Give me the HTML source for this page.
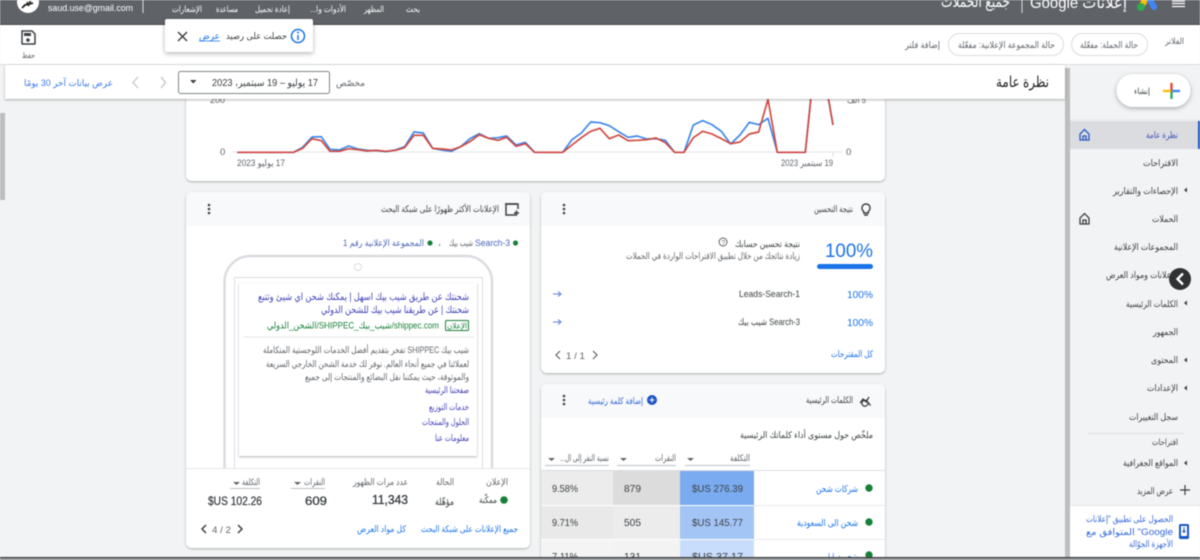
<!DOCTYPE html>
<html lang="ar">
<head>
<meta charset="utf-8">
<title>Google Ads</title>
<style>
html,body{margin:0;padding:0;width:1200px;height:560px;overflow:hidden;background:#f1f3f4}
svg{display:block;filter:blur(.4px)}
text{font-family:"Liberation Sans","DejaVu Sans","Noto Sans CJK SC",sans-serif;font-size:9px;fill:#3c4043}
.r{direction:rtl;text-anchor:start}
.w{fill:#fff}
.g{fill:#5f6368}
.b{fill:#1a73e8}
.p{fill:#3f3fb5}
.h{fill:#3c4043}
</style>
</head>
<body>
<svg width="1200" height="560" viewBox="0 0 1200 560" xmlns="http://www.w3.org/2000/svg">
<defs>
<filter id="s" x="-10%" y="-10%" width="120%" height="125%"><feDropShadow dx="0" dy="1" stdDeviation="1" flood-color="#000" flood-opacity=".3"/></filter>
<filter id="s2" x="-20%" y="-30%" width="140%" height="170%"><feDropShadow dx="0" dy="1.5" stdDeviation="2.5" flood-color="#000" flood-opacity=".3"/></filter>
<clipPath id="cardAd"><rect x="186" y="192" width="344" height="356" rx="6"/></clipPath>
<clipPath id="cardKw"><rect x="541" y="384" width="344" height="180" rx="6"/></clipPath>
<clipPath id="cardSc"><rect x="541" y="192" width="344" height="181" rx="6"/></clipPath>
</defs>

<rect width="1200" height="560" fill="#f1f3f4"/>
<rect x="0" y="113" width="5" height="87" fill="#bdbdbd"/>

<!-- chart card -->
<rect x="186" y="60" width="699" height="121" rx="6" fill="#fff" filter="url(#s)"/>
<line x1="232" y1="152" x2="842" y2="152" stroke="#e3e5e8"/>
<line x1="833" y1="152" x2="833" y2="157" stroke="#dadce0"/>
<g transform="translate(180,90) scale(.33333)" fill="none" stroke-width="5" stroke-linejoin="round">
<polyline stroke="#3b87ea" points="172,187 340,187 368,172 396,141 424,140 450,178 478,180 506,168 534,177 562,181 590,182 618,185 646,180 674,170 702,126 730,129 758,175 786,180 814,184 842,170 870,146 898,131 926,145 954,143 980,138 1008,165 1036,157 1064,187 1148,187 1176,149 1204,129 1232,96 1260,98 1288,107 1316,125 1344,142 1372,138 1400,147 1428,146 1456,151 1484,187 1512,187 1540,105 1568,92 1596,104 1624,124 1652,162 1680,135 1708,97 1736,104 1764,85 1792,187 1876,187 1892,30 1897,-20 1940,-20 1946,30 1959,105"/>
<polyline stroke="#d2483f" points="172,187 340,187 368,175 396,146 424,152 450,184 478,184 506,176 534,179 562,183 590,181 618,184 646,181 674,173 702,136 730,136 758,175 786,177 814,180 842,170 870,155 898,134 926,145 954,151 980,142 1008,169 1036,161 1064,187 1148,187 1176,165 1204,143 1232,124 1260,115 1288,146 1316,135 1344,152 1372,151 1400,149 1428,144 1456,158 1484,187 1512,187 1540,143 1568,124 1596,132 1624,146 1652,161 1680,156 1708,132 1736,126 1764,28 1792,187 1876,187 1892,30 1897,-20 1940,-20 1946,30 1959,105"/>
</g>
<text x="210" y="103" class="g">200</text>
<text x="866" y="103" class="r g" textLength="19" lengthAdjust="spacingAndGlyphs">5 ألف</text>
<text x="220" y="155" class="g" style="font-size:9.5px">0</text>
<text x="846" y="155" class="g" style="font-size:9.5px">0</text>
<text x="285" y="166" class="r g" textLength="48" lengthAdjust="spacingAndGlyphs">17 يوليو 2023</text>
<text x="833" y="166" class="r g" textLength="52" lengthAdjust="spacingAndGlyphs">19 سبتمبر 2023</text>

<!-- ad card -->
<rect x="186" y="192" width="344" height="356" rx="6" fill="#fff" filter="url(#s)"/>
<g clip-path="url(#cardAd)">
<rect x="186" y="192" width="344" height="34" fill="#f8f9fa"/>
<text x="499" y="212" class="r h" textLength="118" lengthAdjust="spacingAndGlyphs">الإعلانات الأكثر ظهورًا على شبكة البحث</text>
<path d="M517 204h-11v11h11" fill="none" stroke="#3c4043" stroke-width="1.5"/><path d="M505 204h13v5M514 213h5M516.500 210.500v5" fill="none" stroke="#3c4043" stroke-width="1.500"/>
<circle cx="209" cy="205" r="1.300" fill="#444"/><circle cx="209" cy="209" r="1.300" fill="#444"/><circle cx="209" cy="213" r="1.300" fill="#444"/>

<circle cx="515.500" cy="243" r="2.600" fill="#188038"/>
<text x="510" y="246" class="r" style="fill:#4a64b8" textLength="35" lengthAdjust="spacingAndGlyphs">Search-3</text>
<text x="473" y="246" class="r g" textLength="24" lengthAdjust="spacingAndGlyphs">شيب بيك</text>
<text x="438" y="246" class="g">،</text>
<circle cx="430" cy="243" r="2.600" fill="#188038"/>
<text x="424" y="246" class="r" style="fill:#4a64b8" textLength="81" lengthAdjust="spacingAndGlyphs">المجموعة الإعلانية رقم 1</text>

<path d="M224.500 470V282a26 26 0 0 1 26-26H466a26 26 0 0 1 26 26V470" fill="none" stroke="#dadce0" stroke-width="2.500"/>
<circle cx="358" cy="267" r="3.500" fill="#fff" stroke="#dadce0"/>
<path d="M234.500 470V277.500H482.500V470" fill="none" stroke="#dadce0"/>
<rect x="239" y="283" width="238" height="173" fill="#fff" filter="url(#s)"/>
<text x="469" y="300" class="r p" style="font-size:10px" textLength="211" lengthAdjust="spacingAndGlyphs">شحنتك عن طريق شيب بيك اسهل | يمكنك شحن اي شيئ وتتبع</text>
<text x="469" y="313" class="r p" style="font-size:10px" textLength="148" lengthAdjust="spacingAndGlyphs">شحنتك | عن طريقنا شيب بيك للشحن الدولي</text>
<rect x="445.500" y="320.500" width="23" height="10" rx="1" fill="none" stroke="#188038"/>
<text x="467" y="328.500" class="r" style="font-size:8px;fill:#188038" textLength="20" lengthAdjust="spacingAndGlyphs">الإعلان</text>
<text x="439" y="328.500" class="r" style="fill:#188038;font-size:9.500px" textLength="172" lengthAdjust="spacingAndGlyphs">shippec.com/شيب_بيك_SHIPPEC/الشحن_الدولي</text>
<line x1="244" y1="337" x2="474" y2="337" stroke="#e3e5e8"/>
<text x="469" y="353" class="r g" textLength="206" lengthAdjust="spacingAndGlyphs">شيب بيك SHIPPEC تفخر بتقديم أفضل الخدمات اللوجستية المتكاملة</text>
<text x="469" y="367" class="r g" textLength="203" lengthAdjust="spacingAndGlyphs">لعملائنا في جميع أنحاء العالم. نوفر لك خدمة الشحن الخارجي السريعة</text>
<text x="469" y="380" class="r g" textLength="164" lengthAdjust="spacingAndGlyphs">والموثوقة، حيث يمكننا نقل البضائع والمنتجات إلى جميع</text>
<text x="469" y="393" class="r p" textLength="44" lengthAdjust="spacingAndGlyphs">صفحتنا الرئيسية</text>
<text x="469" y="410" class="r p" textLength="40" lengthAdjust="spacingAndGlyphs">خدمات التوزيع</text>
<text x="469" y="425" class="r p" textLength="47" lengthAdjust="spacingAndGlyphs">الحلول والمنتجات</text>
<text x="469" y="441" class="r p" textLength="34" lengthAdjust="spacingAndGlyphs">معلومات عنا</text>

<rect x="186" y="468" width="344" height="80" fill="#fff"/>
<line x1="186" y1="468.500" x2="530" y2="468.500" stroke="#e3e5e8"/>
<text x="508" y="485" class="r g" textLength="22" lengthAdjust="spacingAndGlyphs">الإعلان</text>
<text x="454" y="485" class="r g" textLength="18" lengthAdjust="spacingAndGlyphs">الحالة</text>
<text x="408" y="485" class="r g" textLength="55" lengthAdjust="spacingAndGlyphs">عدد مرات الظهور</text>
<text x="325" y="485" class="r g" textLength="21" lengthAdjust="spacingAndGlyphs">النقرات</text>
<path d="M294 482h7l-3.500 3z" fill="#5f6368"/>
<line x1="291" y1="488.500" x2="325" y2="488.500" stroke="#bdc1c6"/>
<text x="260" y="485" class="r g" textLength="18" lengthAdjust="spacingAndGlyphs">التكلفة</text>
<path d="M233 482h7l-3.500 3z" fill="#5f6368"/>
<line x1="230" y1="488.500" x2="260" y2="488.500" stroke="#bdc1c6"/>
<circle cx="504" cy="500" r="3.800" fill="#188038"/>
<text x="497" y="503" class="r h" textLength="18" lengthAdjust="spacingAndGlyphs">ممكّنة</text>
<text x="454" y="505" class="r h" style="font-size:10px" textLength="19" lengthAdjust="spacingAndGlyphs">مؤهّلة</text>
<text x="372" y="504" style="font-size:13px;fill:#3c4043;stroke:#3c4043;stroke-width:.35px" textLength="36" lengthAdjust="spacingAndGlyphs">11,343</text>
<text x="305" y="505" style="font-size:12px;fill:#3c4043;stroke:#3c4043;stroke-width:.3px" textLength="22" lengthAdjust="spacingAndGlyphs">609</text>
<text x="208" y="505" style="font-size:11.500px;fill:#3c4043;stroke:#3c4043;stroke-width:.25px" textLength="54" lengthAdjust="spacingAndGlyphs">$US 102.26</text>
<text x="518" y="532" class="r b" textLength="97" lengthAdjust="spacingAndGlyphs">جميع الإعلانات على شبكة البحث</text>
<text x="406" y="532" class="r b" textLength="49" lengthAdjust="spacingAndGlyphs">كل مواد العرض</text>
<path d="M206 525l-4 4 4 4M238 525l4 4-4 4" fill="none" stroke="#3c4043" stroke-width="1.500"/>
<text x="212" y="533" class="g" style="font-size:9.500px" textLength="19" lengthAdjust="spacingAndGlyphs">4 / 2</text>
</g>

<!-- score card -->
<rect x="541" y="192" width="344" height="181" rx="6" fill="#fff" filter="url(#s)"/>
<g clip-path="url(#cardSc)">
<rect x="541" y="192" width="344" height="34" fill="#f8f9fa"/>
<text x="853" y="212" class="r h" textLength="39" lengthAdjust="spacingAndGlyphs">نتيجة التحسين</text>
<path d="M866 204a4 4 0 0 0-2.300 7.300V213h4.600v-1.700A4 4 0 0 0 866 204zM864 215h4" fill="none" stroke="#3c4043" stroke-width="1.400"/>
<circle cx="564" cy="205" r="1.300" fill="#444"/><circle cx="564" cy="209" r="1.300" fill="#444"/><circle cx="564" cy="213" r="1.300" fill="#444"/>
<text x="825" y="257" style="font-size:19px;fill:#1a73e8" textLength="48" lengthAdjust="spacingAndGlyphs">100%</text>
<rect x="817" y="264" width="56" height="5" rx="2.500" fill="#1a73e8"/>
<text x="800" y="247" class="r h" textLength="65" lengthAdjust="spacingAndGlyphs">نتيجة تحسين حسابك</text>
<circle cx="723" cy="242" r="4" fill="none" stroke="#5f6368"/>
<text x="721.500" y="244.500" class="g" style="font-size:6.500px">?</text>
<text x="800" y="259" class="r g" textLength="174" lengthAdjust="spacingAndGlyphs">زيادة نتائجك من خلال تطبيق الاقتراحات الواردة في الحملات</text>
<text x="847" y="298" class="b" style="font-size:10.500px" textLength="26" lengthAdjust="spacingAndGlyphs">100%</text>
<text x="739" y="297" class="h" style="font-size:9.500px" textLength="61" lengthAdjust="spacingAndGlyphs">Leads-Search-1</text>
<path d="M553 294h8M558 291.500l3 2.500-3 2.500" fill="none" stroke="#5b7fe0"/>
<text x="847" y="326" class="b" style="font-size:10.500px" textLength="26" lengthAdjust="spacingAndGlyphs">100%</text>
<text x="800" y="325" class="r h" style="font-size:9.500px" textLength="62" lengthAdjust="spacingAndGlyphs">Search-3 شيب بيك</text>
<path d="M553 322h8M558 319.500l3 2.500-3 2.500" fill="none" stroke="#5b7fe0"/>
<text x="873" y="357" class="r b" textLength="42" lengthAdjust="spacingAndGlyphs">كل المقترحات</text>
<path d="M560 351l-4 4 4 4M593 351l4 4-4 4" fill="none" stroke="#5f6368" stroke-width="1.200"/>
<text x="566" y="359" class="g" style="font-size:9.500px" textLength="19" lengthAdjust="spacingAndGlyphs">1 / 1</text>
</g>

<!-- keywords card -->
<rect x="541" y="384" width="344" height="190" rx="6" fill="#fff" filter="url(#s)"/>
<g clip-path="url(#cardKw)">
<rect x="541" y="384" width="344" height="34" fill="#f8f9fa"/>
<text x="853" y="403" class="r h" textLength="47" lengthAdjust="spacingAndGlyphs">الكلمات الرئيسية</text>
<path d="M860 403l3-4 3 3 3-5M867 401a3 3 0 1 0 .1 .1l3.500 4.500" fill="none" stroke="#3c4043" stroke-width="1.300"/>
<text x="643" y="404" class="r" style="fill:#3367d6" textLength="55" lengthAdjust="spacingAndGlyphs">إضافة كلمة رئيسية</text>
<circle cx="652" cy="400" r="5" fill="#1a56c4"/><path d="M649.500 400h5M652 397.500v5" stroke="#fff"/>
<circle cx="564" cy="396" r="1.300" fill="#444"/><circle cx="564" cy="400" r="1.300" fill="#444"/><circle cx="564" cy="404" r="1.300" fill="#444"/>
<text x="873" y="438" class="r h" textLength="133" lengthAdjust="spacingAndGlyphs">ملخّص حول مستوى أداء كلماتك الرئيسية</text>
<text x="750" y="461" class="r g" textLength="20" lengthAdjust="spacingAndGlyphs">التكلفة</text>
<path d="M687 458h7l-3.500 3z" fill="#5f6368"/><line x1="685" y1="465.500" x2="750" y2="465.500" stroke="#bdc1c6"/>
<text x="676" y="461" class="r g" textLength="21" lengthAdjust="spacingAndGlyphs">النقرات</text>
<path d="M620 458h7l-3.500 3z" fill="#5f6368"/><line x1="617" y1="465.500" x2="676" y2="465.500" stroke="#bdc1c6"/>
<text x="609" y="461" class="r g" textLength="49" lengthAdjust="spacingAndGlyphs">نسبة النقر إلى ال...</text>
<path d="M548 458h7l-3.500 3z" fill="#5f6368"/><line x1="545" y1="465.500" x2="609" y2="465.500" stroke="#bdc1c6"/>
<line x1="541" y1="470.500" x2="885" y2="470.500" stroke="#dadce0"/>

<rect x="541" y="471" width="72" height="34" fill="#ececec"/><rect x="613" y="471" width="67" height="34" fill="#dcdcdc"/><rect x="680" y="471" width="74" height="34" fill="#7aabf0"/>
<rect x="541" y="506" width="72" height="33" fill="#e9e9e9"/><rect x="613" y="506" width="67" height="33" fill="#ececec"/><rect x="680" y="506" width="74" height="33" fill="#a2c5f6"/>
<rect x="541" y="540" width="72" height="20" fill="#f4f4f4"/><rect x="613" y="540" width="67" height="20" fill="#f3f3f3"/><rect x="680" y="540" width="74" height="20" fill="#c8ddfb"/>
<line x1="754" y1="505.500" x2="885" y2="505.500" stroke="#e8eaed"/><line x1="754" y1="539.500" x2="885" y2="539.500" stroke="#e8eaed"/>

<text x="552" y="492" class="h" style="font-size:10.500px" textLength="26" lengthAdjust="spacingAndGlyphs">9.58%</text>
<text x="624" y="492" class="h" style="font-size:10.500px" textLength="17" lengthAdjust="spacingAndGlyphs">879</text>
<text x="692" y="492" class="h" style="font-size:10.500px" textLength="51" lengthAdjust="spacingAndGlyphs">$US 276.39</text>
<circle cx="869" cy="488" r="3.700" fill="#188038"/>
<text x="858" y="492" class="r b" style="font-size:9.500px" textLength="42" lengthAdjust="spacingAndGlyphs">شركات شحن</text>

<text x="552" y="526" class="h" style="font-size:10.500px" textLength="26" lengthAdjust="spacingAndGlyphs">9.71%</text>
<text x="624" y="526" class="h" style="font-size:10.500px" textLength="17" lengthAdjust="spacingAndGlyphs">505</text>
<text x="692" y="526" class="h" style="font-size:10.500px" textLength="51" lengthAdjust="spacingAndGlyphs">$US 145.77</text>
<circle cx="869" cy="522" r="3.700" fill="#188038"/>
<text x="858" y="526" class="r b" style="font-size:9.500px" textLength="61" lengthAdjust="spacingAndGlyphs">شحن الى السعودية</text>

<text x="552" y="560" class="h" style="font-size:10.500px" textLength="26" lengthAdjust="spacingAndGlyphs">7.11%</text>
<text x="624" y="560" class="h" style="font-size:10.500px" textLength="17" lengthAdjust="spacingAndGlyphs">131</text>
<text x="692" y="560" class="h" style="font-size:10.500px" textLength="51" lengthAdjust="spacingAndGlyphs">$US 37.17</text>
<circle cx="869" cy="555" r="3.700" fill="#188038"/>
<text x="858" y="560" class="r b" style="font-size:9.500px" textLength="30" lengthAdjust="spacingAndGlyphs">شحن دوليا</text>
</g>

<!-- sidebar -->
<rect x="1070" y="64" width="130" height="496" fill="#f1f3f4"/>
<rect x="1065" y="68" width="5" height="492" fill="#bdbdbd"/>
<rect x="1116.500" y="74" width="74" height="33" rx="16.500" fill="#fff" filter="url(#s2)"/>
<path d="M1171.500 83v8" stroke="#ea4335" stroke-width="2.400"/><path d="M1171.500 91v8" stroke="#34a853" stroke-width="2.400"/><path d="M1163 91h8" stroke="#fbbc04" stroke-width="2.400"/><path d="M1172 91h8" stroke="#4285f4" stroke-width="2.400"/>
<text x="1150" y="94" class="r h" style="font-size:8.500px" textLength="16" lengthAdjust="spacingAndGlyphs">إنشاء</text>
<line x1="1070" y1="120" x2="1200" y2="120" stroke="#e3e5e8"/>
<rect x="1070" y="121" width="130" height="28" fill="#dadce0"/><rect x="1198" y="121" width="2" height="28" fill="#1a56c4"/>
<path d="M1080 140v-6l4.500-4.500 4.500 4.500v6zM1083 140v-4h3v4" fill="none" stroke="#2a57c0" stroke-width="1.300"/>
<text x="1178" y="138" class="r" style="fill:#3f51b5" textLength="32" lengthAdjust="spacingAndGlyphs">نظرة عامة</text>
<text x="1178" y="166" class="r h" textLength="35" lengthAdjust="spacingAndGlyphs">الاقتراحات</text>
<path d="M1187 187.500v5l-3-2.500z" fill="#3c4043"/>
<text x="1178" y="194" class="r h" textLength="65" lengthAdjust="spacingAndGlyphs">الإحصاءات والتقارير</text>
<path d="M1080 224v-6l4.500-4.500 4.500 4.500v6zM1083 224v-4h3v4" fill="none" stroke="#3c4043" stroke-width="1.300"/>
<text x="1178" y="222" class="r h" textLength="26" lengthAdjust="spacingAndGlyphs">الحملات</text>
<text x="1178" y="250" class="r h" textLength="64" lengthAdjust="spacingAndGlyphs">المجموعات الإعلانية</text>
<text x="1178" y="278" class="r h" textLength="72" lengthAdjust="spacingAndGlyphs">الإعلانات ومواد العرض</text>
<path d="M1187 300.500v5l-3-2.500z" fill="#3c4043"/>
<text x="1178" y="307" class="r h" textLength="52" lengthAdjust="spacingAndGlyphs">الكلمات الرئيسية</text>
<text x="1178" y="335" class="r h" textLength="25" lengthAdjust="spacingAndGlyphs">الجمهور</text>
<path d="M1187 357.500v5l-3-2.500z" fill="#3c4043"/>
<text x="1178" y="363" class="r h" textLength="27" lengthAdjust="spacingAndGlyphs">المحتوى</text>
<path d="M1187 385.500v5l-3-2.500z" fill="#3c4043"/>
<text x="1178" y="391" class="r h" textLength="31" lengthAdjust="spacingAndGlyphs">الإعدادات</text>
<text x="1178" y="420" class="r h" textLength="49" lengthAdjust="spacingAndGlyphs">سجل التغييرات</text>
<line x1="1088" y1="433.500" x2="1184" y2="433.500" stroke="#dadce0"/>
<text x="1178" y="445" class="r h" style="font-size:8.500px" textLength="26" lengthAdjust="spacingAndGlyphs">اقتراحات</text>
<path d="M1187 460.500v5l-3-2.500z" fill="#3c4043"/>
<text x="1178" y="466" class="r h" textLength="55" lengthAdjust="spacingAndGlyphs">المواقع الجغرافية</text>
<path d="M1180 490h10M1185 485v10" stroke="#3c4043" stroke-width="1.200"/>
<text x="1173" y="494" class="r h" textLength="36" lengthAdjust="spacingAndGlyphs">عرض المزيد</text>
<rect x="1070" y="506" width="130" height="51" fill="#fff"/>
<line x1="1070" y1="505.500" x2="1200" y2="505.500" stroke="#e3e5e8"/>
<text x="1173" y="522" class="r" style="fill:#3367d6" textLength="87" lengthAdjust="spacingAndGlyphs">الحصول على تطبيق "إعلانات</text>
<text x="1173" y="535" class="r" style="fill:#3367d6" textLength="87" lengthAdjust="spacingAndGlyphs">Google" المتوافق مع</text>
<text x="1173" y="547" class="r" style="fill:#3367d6" textLength="44" lengthAdjust="spacingAndGlyphs">الأجهزة الجوّالة</text>
<rect x="1179" y="524" width="10" height="15" rx="1.500" fill="#1a56c4"/><rect x="1181" y="526" width="6" height="10" fill="#fff"/><path d="M1184 527v5M1182.500 530.500l1.500 2 1.500-2" fill="none" stroke="#1a56c4"/>
<circle cx="1180" cy="279" r="11" fill="#2f3133"/>
<path d="M1183 273.500l-5.500 5.500 5.500 5.500" fill="none" stroke="#fff" stroke-width="2.400"/>

<!-- toolbar -->
<rect x="0" y="25" width="1200" height="39" fill="#fff"/>
<line x1="0" y1="64.500" x2="1200" y2="64.500" stroke="#dadce0"/>
<path d="M22 31h10l3 3v9.500a.5.500 0 0 1-.5.500h-12a.5.500 0 0 1-.5-.5z" fill="none" stroke="#3c4043" stroke-width="1.500"/>
<rect x="24" y="33" width="7" height="3" fill="#3c4043"/><circle cx="28" cy="40" r="1.800" fill="#3c4043"/>
<text x="35" y="58" class="r g" style="font-size:8px" textLength="13" lengthAdjust="spacingAndGlyphs">حفظ</text>
<text x="1184" y="44" class="r g" style="font-size:8.500px" textLength="19" lengthAdjust="spacingAndGlyphs">الفلاتر</text>
<rect x="1071.500" y="33.500" width="76" height="22" rx="11" fill="#fff" stroke="#dadce0"/>
<text x="1138" y="48" class="r g" textLength="58" lengthAdjust="spacingAndGlyphs">حالة الحملة: مفعّلة</text>
<rect x="948.500" y="33.500" width="115" height="22" rx="11" fill="#fff" stroke="#dadce0"/>
<text x="1055" y="48" class="r g" textLength="97" lengthAdjust="spacingAndGlyphs">حالة المجموعة الإعلانية: مفعّلة</text>
<text x="940" y="48" class="r g" textLength="35" lengthAdjust="spacingAndGlyphs">إضافة فلتر</text>

<!-- overview bar -->
<rect x="5" y="65" width="1060" height="34" fill="#fff" filter="url(#s)"/>
<text x="1049" y="87" class="r" style="font-size:15px;fill:#202124" textLength="53" lengthAdjust="spacingAndGlyphs">نظرة عامة</text>
<text x="365" y="86" class="r g" textLength="29" lengthAdjust="spacingAndGlyphs">مخصّص</text>
<rect x="178.500" y="71.500" width="151" height="22" rx="2" fill="#fff" stroke="#80868b"/>
<text x="318" y="86" class="r h" style="font-size:10px" textLength="106" lengthAdjust="spacingAndGlyphs">17 يوليو – 19 سبتمبر، 2023</text>
<path d="M190 80h6.500l-3.250 3.500z" fill="#3c4043"/>
<path d="M161 77l4.500 5.500-4.500 5.500M138 77l-5 5.500 5 5.500" fill="none" stroke="#bdc1c6" stroke-width="1.200"/>
<text x="113" y="86" class="r" style="fill:#3b78e7" textLength="89" lengthAdjust="spacingAndGlyphs">عرض بيانات آخر 30 يومًا</text>

<!-- header -->
<rect x="0" y="0" width="1200" height="24" fill="#5f6368"/>
<line x1="0" y1="24.500" x2="1200" y2="24.500" stroke="#4a4d50"/>
<circle cx="28" cy="2" r="11" fill="#fff"/>
<path d="M22 8l3-3 8-2M27 2l2 4M30 1v3" stroke="#222" stroke-width="1.800" fill="none"/>
<text x="48" y="11" class="w" style="font-size:9.500px" textLength="85" lengthAdjust="spacingAndGlyphs">saud.use@gmail.com</text>
<line x1="143" y1="0" x2="143" y2="13" stroke="#dadce0"/>
<text x="202" y="12" class="r w" style="font-size:8.500px" textLength="30" lengthAdjust="spacingAndGlyphs">الإشعارات</text>
<text x="238" y="12" class="r w" style="font-size:8.500px" textLength="22" lengthAdjust="spacingAndGlyphs">مساعدة</text>
<text x="290" y="12" class="r w" style="font-size:8.500px" textLength="35" lengthAdjust="spacingAndGlyphs">إعادة تحميل</text>
<text x="346" y="12" class="r w" style="font-size:8.500px" textLength="36" lengthAdjust="spacingAndGlyphs">الأدوات وا...</text>
<text x="384" y="12" class="r w" style="font-size:8.500px" textLength="20" lengthAdjust="spacingAndGlyphs">المظهر</text>
<text x="420" y="12" class="r w" style="font-size:8.500px" textLength="14" lengthAdjust="spacingAndGlyphs">بحث</text>
<path d="M1172 1h13M1172 3.500h13M1172 6.500h13" stroke="#fff" stroke-width="1.300"/>
<path d="M1141 7l7-12" stroke="#fbbc04" stroke-width="6" stroke-linecap="round"/>
<path d="M1149 -2l5 9" stroke="#4285f4" stroke-width="6" stroke-linecap="round"/>
<circle cx="1141" cy="7" r="4" fill="#34a853"/>
<text x="1127" y="8" class="r w" style="font-size:16px" textLength="97" lengthAdjust="spacingAndGlyphs">إعلانات Google</text>
<line x1="1022" y1="0" x2="1022" y2="13" stroke="#dadce0"/>
<text x="1010" y="7" class="r w" style="font-size:16px" textLength="69" lengthAdjust="spacingAndGlyphs">جميع الحملات</text>

<!-- toast -->
<rect x="165" y="19" width="148" height="33" rx="2" fill="#fff" filter="url(#s2)"/>
<circle cx="298" cy="36" r="6.500" fill="none" stroke="#1a73e8" stroke-width="1.500"/>
<path d="M298 35v5" stroke="#1a73e8" stroke-width="1.500"/><circle cx="298" cy="32.500" r="1" fill="#1a73e8"/>
<text x="287" y="39" class="r h" textLength="61" lengthAdjust="spacingAndGlyphs">حصلت على رصيد</text>
<text x="220" y="39" class="r b" textLength="21" lengthAdjust="spacingAndGlyphs">عرض</text>
<line x1="199" y1="41" x2="220" y2="41" stroke="#1a73e8" stroke-width=".8"/>
<path d="M178 32l9 9M187 32l-9 9" stroke="#444" stroke-width="1.500"/>

<!-- bottom strip -->
<rect x="0" y="557" width="1200" height="1" fill="#333"/>
<rect x="0" y="558" width="1200" height="2" fill="#8d9195"/>
</svg>
</body>
</html>
